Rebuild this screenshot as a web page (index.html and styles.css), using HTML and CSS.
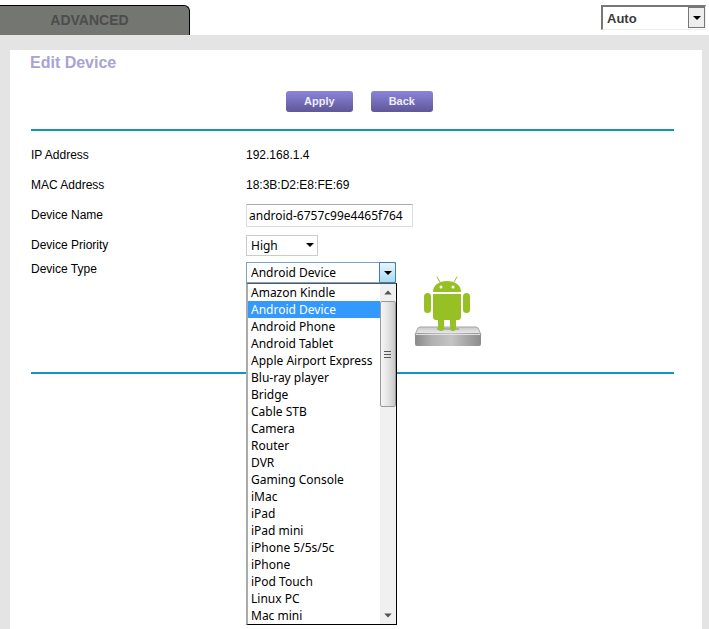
FILE: index.html
```html
<!DOCTYPE html>
<html lang="en">
<head>
  <meta charset="UTF-8">
  <meta name="viewport" content="width=device-width, initial-scale=1.0">
  <title>Edit Device</title>
  <link rel="stylesheet" href="styles.css">
</head>
<body>
<div class="header">
  <a class="tab" href="#">ADVANCED</a>
  <div class="select-box language">
    <select aria-label="Language">
      <option>Auto</option>
    </select>
    <span class="arrow"></span>
  </div>
</div>
<div class="panel">
  <h1 class="title">Edit Device</h1>
  <div class="buttons">
    <button class="btn" type="button">Apply</button>
    <button class="btn" type="button">Back</button>
  </div>
  <form class="form">
    <div class="form-row">
      <div class="label">IP Address</div>
      <div>192.168.1.4</div>
    </div>
    <div class="form-row">
      <div class="label">MAC Address</div>
      <div>18:3B:D2:E8:FE:69</div>
    </div>
    <div class="form-row">
      <label class="label" for="deviceName">Device Name</label>
      <input class="text-box" type="text" id="deviceName" value="android-6757c99e4465f764">
    </div>
    <div class="form-row">
      <label class="label" for="priority">Device Priority</label>
      <div class="select-box priority">
        <select id="priority">
          <option>High</option>
        </select>
        <span class="arrow"></span>
      </div>
    </div>
    <div class="form-row type-row">
      <label class="label" for="deviceType">Device Type</label>
      <div class="select-box type">
        <select id="deviceType">
          <option>Android Device</option>
        </select>
        <span class="arrow"></span>
        <div class="menu">
          <ul class="options" role="listbox" aria-label="Device types">
            <li role="option">Amazon Kindle</li>
            <li class="selected" role="option" aria-selected="true">Android Device</li>
            <li role="option">Android Phone</li>
            <li role="option">Android Tablet</li>
            <li role="option">Apple Airport Express</li>
            <li role="option">Blu-ray player</li>
            <li role="option">Bridge</li>
            <li role="option">Cable STB</li>
            <li role="option">Camera</li>
            <li role="option">Router</li>
            <li role="option">DVR</li>
            <li role="option">Gaming Console</li>
            <li role="option">iMac</li>
            <li role="option">iPad</li>
            <li role="option">iPad mini</li>
            <li role="option">iPhone 5/5s/5c</li>
            <li role="option">iPhone</li>
            <li role="option">iPod Touch</li>
            <li role="option">Linux PC</li>
            <li role="option">Mac mini</li>
          </ul>
          <div class="scrollbar">
            <svg class="scroll-arrow" viewBox="0 0 16 18"><path d="M4 11L8 7L12 11Z" fill="#555"/></svg>
            <div class="thumb">
              <svg width="8" height="9" viewBox="0 0 8 9"><path d="M0 1.5H7M0 4.5H7M0 7.5H7" stroke="#555"/></svg>
            </div>
            <svg class="scroll-arrow" viewBox="0 0 16 18"><path d="M4 7L8 11L12 7Z" fill="#555"/></svg>
          </div>
        </div>
      </div>
      <svg class="device-icon" viewBox="0 0 68 72" role="img" aria-label="Android Device">
        <defs>
          <linearGradient id="side" x1="0" x2="1" y1="0" y2="0">
            <stop offset="0" stop-color="#8a8a8a"/>
            <stop offset="0.25" stop-color="#b0b0b0"/>
            <stop offset="0.55" stop-color="#c4c4c4"/>
            <stop offset="1" stop-color="#8c8c8c"/>
          </linearGradient>
          <linearGradient id="top" x1="0" x2="0" y1="0" y2="1">
            <stop offset="0" stop-color="#c8c8c8"/>
            <stop offset="1" stop-color="#f2f2f2"/>
          </linearGradient>
        </defs>
        <path d="M6 51H62Q64 51 65 54L67 59H1L3 54Q4 51 6 51Z" fill="url(#top)" stroke="#a5a5a5"/>
        <path d="M1 60Q1 57 4 57H64Q67 57 67 60V68Q67 70 65 70H3Q1 70 1 68Z" fill="url(#side)"/>
        <path d="M2 58.5H66" stroke="#e2e2e2"/>
        <path d="M23 53H45" stroke="#777" stroke-width="2" opacity="0.4"/>
        <g fill="#97c024">
          <path d="M19 16C19 9 25 5 33 5S47 9 47 16Z"/>
          <path d="M19 18H47V41Q47 44 44 44H42V52Q42 55 39 55T36 52V44H30V52Q30 55 27 55T24 52V44H22Q19 44 19 41Z"/>
          <rect x="10" y="17" width="7" height="20" rx="3.5"/>
          <rect x="49" y="17" width="7" height="20" rx="3.5"/>
        </g>
        <path d="M26 6L23 1M40 6L43 1" stroke="#97c024" stroke-linecap="round"/>
        <circle cx="27" cy="11" r="1.5" fill="#fff"/>
        <circle cx="39" cy="11" r="1.5" fill="#fff"/>
      </svg>
    </div>
  </form>
</div>
</body>
</html>
```
FILE: styles.css
```css
* {
  box-sizing: border-box;
}
body {
  display: flex;
  flex-direction: column;
  min-height: 100vh;
  margin: 0;
  background-color: #e4e4e4;
  color: #000;
  font-family: "Liberation Sans", Arial, sans-serif;
  font-size: 12px;
}
.header {
  display: flex;
  justify-content: space-between;
  align-items: flex-start;
  padding: 5px 3px 0 0;
  background-color: #fff;
}
.tab {
  width: 190px;
  height: 30px;
  padding-right: 10px;
  border: 1px solid #000;
  border-width: 1px 1px 0 0;
  border-top-right-radius: 6px;
  background-color: #747672;
  color: #4c4d4b;
  font-size: 14px;
  font-weight: bold;
  line-height: 28px;
  text-align: center;
  text-decoration: none;
}
.panel {
  flex: 1;
  margin: 15px 7px 0 10px;
  padding: 3px 28px 0 20px;
  background-color: #fff;
}
.title {
  margin: 0;
  color: #a9a3d6;
  font-size: 16px;
  line-height: 20px;
}
.buttons {
  display: flex;
  justify-content: center;
  gap: 18px;
  padding: 18px 0 17px 15px;
}
.btn {
  height: 21px;
  padding: 0 18px 2px;
  border: none;
  border-radius: 3px;
  background: linear-gradient(#8c84dc, #5f5796);
  color: #eeecfa;
  font-family: inherit;
  font-size: 11px;
  font-weight: bold;
  cursor: pointer;
}
.form {
  margin-left: 1px;
  padding-top: 9px;
  border-top: 2px solid #1593bd;
  border-bottom: 2px solid #1593bd;
}
.form-row {
  display: flex;
  align-items: center;
  height: 30px;
}
.label {
  width: 215px;
}
.text-box,
.select-box select {
  font-family: "Noto Sans", Tahoma, sans-serif;
  font-size: 12px;
  color: #000;
}
.text-box {
  width: 167px;
  height: 23px;
  padding: 0 2px;
  border: 1px solid #ddd;
  border-top-color: #aaa;
}
.select-box {
  display: flex;
  position: relative;
}
.select-box select {
  appearance: none;
  width: 100%;
  height: 21px;
  padding: 0 4px;
  border: 1px solid #ccc;
  border-radius: 0;
  background-color: #fff;
}
.arrow {
  display: flex;
  position: absolute;
  top: 0;
  right: 0;
  bottom: 0;
  align-items: center;
  justify-content: center;
  width: 17px;
  pointer-events: none;
}
.arrow::after {
  content: "";
  border: 4px solid transparent;
  border-top-color: #000;
  border-bottom: none;
}
.language {
  width: 105px;
}
.select-box.language select {
  height: 25px;
  border: 2px solid #777;
  border-right: 1px solid #eee;
  border-bottom: 1px solid #eee;
  color: #3c3c3c;
  font-family: inherit;
  font-size: 13px;
  font-weight: bold;
}
.language .arrow {
  top: 2px;
  right: 1px;
  bottom: 2px;
  border: 1px solid #777;
  background-color: #eee;
}
.priority {
  width: 72px;
}
.type {
  width: 150px;
}
.type-row {
  align-items: flex-start;
  height: 112px;
  padding-top: 2px;
}
.type select {
  border-color: #78a7c9;
}
.type .arrow {
  border: 1px solid #3c7fb1;
  border-radius: 0 2px 2px 0;
  background: linear-gradient(#e9f5fc, #a9daf4);
}
.menu {
  display: flex;
  position: absolute;
  top: 100%;
  left: 0;
  z-index: 1;
  width: 151px;
  border: 1px solid #000;
  border-top-color: #555;
  border-left: 2px solid #aaa;
  background-color: #fff;
  font-family: "Noto Sans", Tahoma, sans-serif;
}
.options {
  flex: 1;
  margin: 0;
  padding: 0;
  list-style: none;
  line-height: 17px;
  white-space: nowrap;
}
.options li {
  padding-left: 3px;
}
.options .selected {
  background-color: #3399ff;
  color: #fff;
}
.scrollbar {
  display: flex;
  flex-direction: column;
  width: 16px;
  background-color: #f0f0f0;
}
.scroll-arrow {
  width: 16px;
  height: 17px;
}
.thumb {
  display: flex;
  align-items: center;
  justify-content: center;
  height: 106px;
  margin-bottom: auto;
  border: 1px solid #999;
  border-radius: 2px;
  background: linear-gradient(to right, #f5f5f5, #e4e4e4 50%, #c8c8c8);
}
.device-icon {
  width: 68px;
  height: 72px;
  margin: 14px 0 0 18px;
}
```
